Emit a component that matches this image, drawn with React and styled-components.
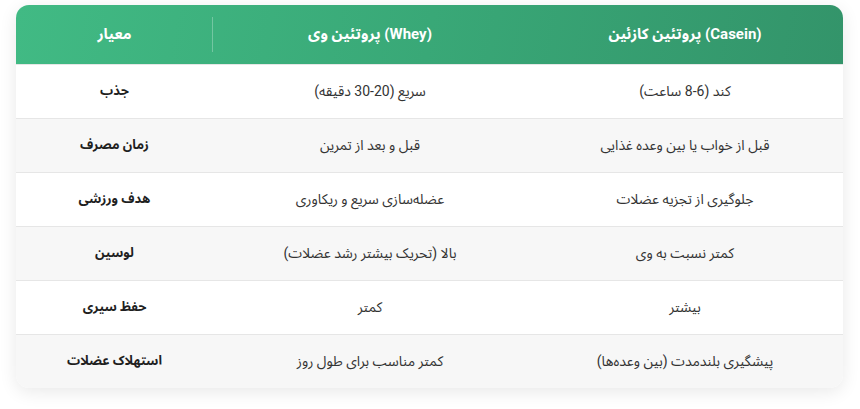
import React from "react";
import styled, { createGlobalStyle } from "styled-components";

const GlobalStyle = createGlobalStyle`
  html, body {
    margin: 0;
    padding: 0;
    background: #ffffff;
  }
  body {
    font-family: Roboto, "Noto Sans Arabic", "Vazirmatn", "DejaVu Sans", sans-serif;
  }
`;

const Page = styled.div`
  padding: 5px 17px 20px 16px;
`;

const Card = styled.div`
  border-radius: 13px;
  overflow: hidden;
  background: #ffffff;
  box-shadow: 0 4px 18px rgba(0, 0, 0, 0.09);
`;

const Table = styled.table`
  width: 100%;
  border-collapse: collapse;
  table-layout: fixed;
  direction: rtl;
`;

const Col = styled.col`
  width: ${(p) => p.$width};
`;

const HeadRow = styled.tr`
  height: 59px;
  background: linear-gradient(100deg, #41ba84 0%, #39a877 50%, #33946a 100%);
`;

const HeadCell = styled.th`
  position: relative;
  color: #ffffff;
  font-size: 15px;
  font-weight: 700;
  text-align: center;
  padding: 0 12px;

  ${(p) =>
    p.$divider &&
    `
    &::after {
      content: "";
      position: absolute;
      right: 0;
      top: 12px;
      bottom: 12px;
      width: 1px;
      background: rgba(255, 255, 255, 0.28);
    }
  `}
`;

const Row = styled.tr`
  height: 54px;
  background: ${(p) => (p.$alt ? "#f7f7f7" : "#ffffff")};
  border-top: 1px solid #e6e6e6;
`;

const Cell = styled.td`
  text-align: center;
  font-size: ${(p) => (p.$strong ? "13px" : "14px")};
  color: ${(p) => (p.$strong ? "#1f1f1f" : "#333333")};
  padding: 0 12px;
  font-weight: ${(p) => (p.$strong ? 700 : 400)};
`;

const rows = [
  ["کند (6-8 ساعت)", "سریع (20-30 دقیقه)", "جذب"],
  ["قبل از خواب یا بین وعده غذایی", "قبل و بعد از تمرین", "زمان مصرف"],
  ["جلوگیری از تجزیه عضلات", "عضله‌سازی سریع و ریکاوری", "هدف ورزشی"],
  ["کمتر نسبت به وی", "بالا (تحریک بیشتر رشد عضلات)", "لوسین"],
  ["بیشتر", "کمتر", "حفظ سیری"],
  ["پیشگیری بلندمدت (بین وعده‌ها)", "کمتر مناسب برای طول روز", "استهلاک عضلات"],
];

export default function App() {
  return (
    <>
      <GlobalStyle />
      <Page>
        <Card>
          <Table dir="rtl">
            <colgroup>
              <Col $width="316px" />
              <Col $width="314px" />
              <Col $width="197px" />
            </colgroup>
            <thead>
              <HeadRow>
                <HeadCell>(Casein) پروتئین کازئین</HeadCell>
                <HeadCell>(Whey) پروتئین وی</HeadCell>
                <HeadCell $divider>معیار</HeadCell>
              </HeadRow>
            </thead>
            <tbody>
              {rows.map((row, i) => (
                <Row key={i} $alt={i % 2 === 1}>
                  <Cell>{row[0]}</Cell>
                  <Cell>{row[1]}</Cell>
                  <Cell $strong>{row[2]}</Cell>
                </Row>
              ))}
            </tbody>
          </Table>
        </Card>
      </Page>
    </>
  );
}
